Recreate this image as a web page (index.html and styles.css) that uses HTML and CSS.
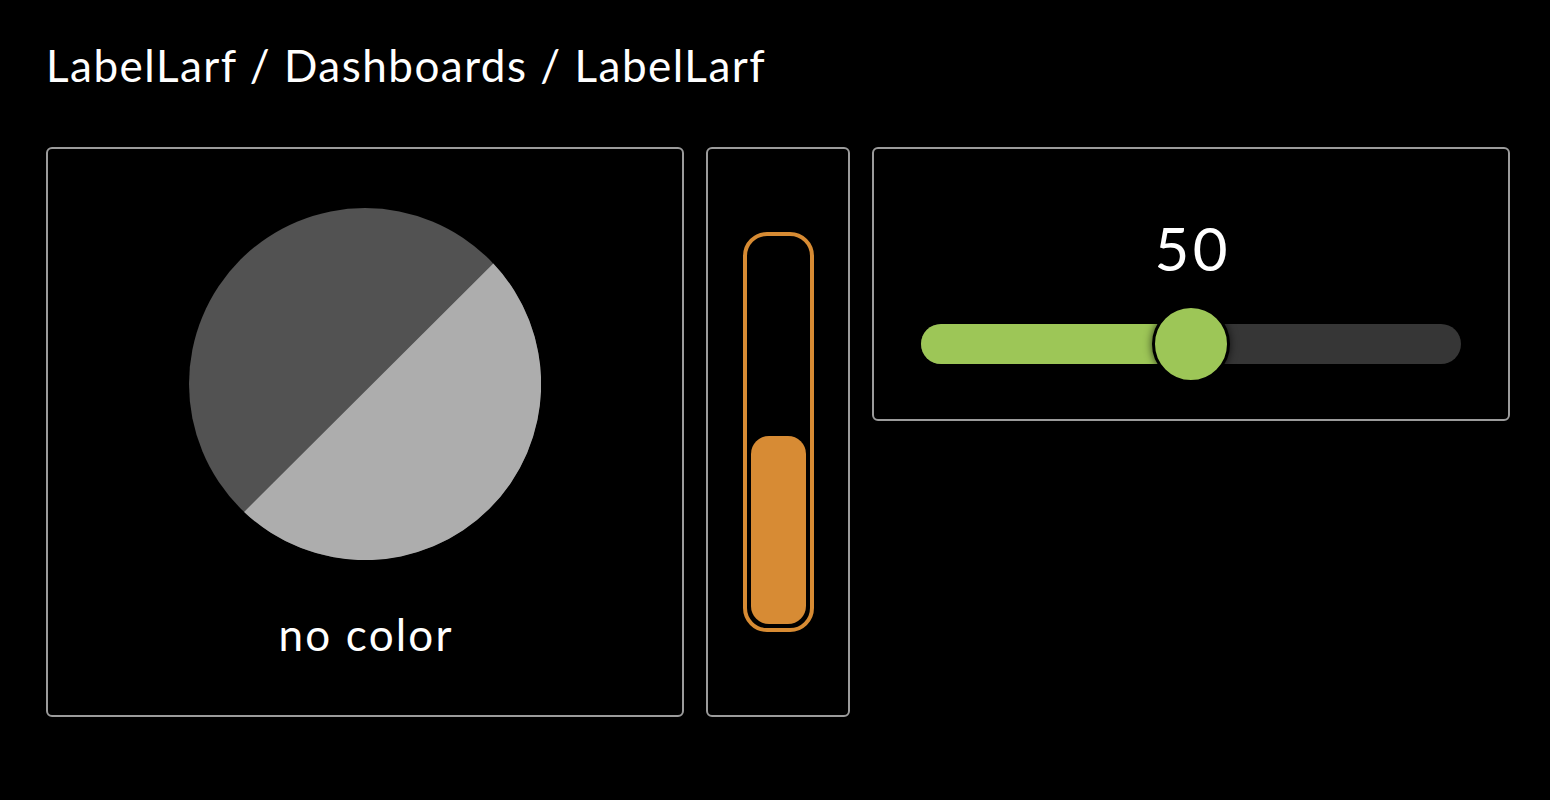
FILE: index.html
```html
<!DOCTYPE html>
<html>
<head>
<meta charset="utf-8">
<link rel="stylesheet" href="styles.css">
</head>
<body>
<header class="crumbs">LabelLarf / Dashboards / LabelLarf</header>
<main class="grid">
  <section class="panel panel-pie">
    <svg class="pie" width="352" height="352" viewBox="0 0 352 352">
      <circle cx="176" cy="176" r="176" fill="#525252"/>
      <path d="M304.3 55.5 A176 176 0 0 1 55.1 303.9 Z" fill="#adadad"/>
    </svg>
    <div class="pie-label">no color</div>
  </section>
  <section class="panel panel-level">
    <div class="level">
      <div class="level-fill" style="height:188px"></div>
    </div>
  </section>
  <section class="panel panel-slider">
    <div class="slider-value">50</div>
    <div class="slider">
      <div class="slider-track">
        <div class="slider-fill" style="width:50%"></div>
      </div>
      <div class="slider-knob" style="left:50%"></div>
    </div>
  </section>
</main>
</body>
</html>
```
FILE: styles.css
```css
* { box-sizing: border-box; }
html, body {
  margin: 0;
  background: #000;
  color: #fff;
  font-family: "Lato", "Noto Sans", sans-serif;
}
body {
  width: 1550px;
  height: 800px;
  overflow: hidden;
}
.crumbs {
  padding: 38px 0 0 46px;
  height: 147px;
  font-size: 44px;
  line-height: 54px;
  letter-spacing: 1.5px;
  font-weight: 400;
}
.grid {
  display: flex;
  align-items: flex-start;
  gap: 22px;
  padding-left: 46px;
}
.panel {
  border: 2px solid #9b9b9b;
  border-radius: 6px;
}
.panel-pie {
  width: 638px;
  height: 570px;
  display: flex;
  flex-direction: column;
  align-items: center;
  padding-top: 59px;
}
.pie { display: block; }
.pie-label {
  margin-top: 48px;
  font-size: 44px;
  line-height: 52px;
  letter-spacing: 2.2px;
  padding-left: 2.2px;
}
.panel-level {
  width: 144px;
  height: 570px;
  display: flex;
  align-items: center;
  justify-content: center;
}
.level {
  width: 71px;
  height: 400px;
  border: 4px solid #d78b33;
  border-radius: 24px;
  padding: 4px;
  display: flex;
  flex-direction: column;
  justify-content: flex-end;
}
.level-fill {
  background: #d78b34;
  border-radius: 18px;
  box-shadow: 0 0 3px rgba(0,0,0,0.8);
}
.panel-slider {
  width: 638px;
  height: 274px;
  padding: 64px 47px 0;
  display: flex;
  flex-direction: column;
  align-items: stretch;
}
.slider-value {
  text-align: center;
  font-size: 60px;
  line-height: 70px;
  letter-spacing: 3.5px;
  padding-left: 3.5px;
}
.slider {
  position: relative;
  margin-top: 41px;
  height: 40px;
}
.slider-track {
  height: 40px;
  border-radius: 20px;
  background: #363636;
  overflow: hidden;
}
.slider-fill {
  height: 100%;
  background: #9dc657;
}
.slider-knob {
  position: absolute;
  top: 50%;
  width: 78px;
  height: 78px;
  margin: -39px 0 0 -39px;
  border-radius: 50%;
  background: #9dc657;
  border: 3px solid #000;
  box-shadow: 0 0 8px rgba(0,0,0,0.7);
}
```
